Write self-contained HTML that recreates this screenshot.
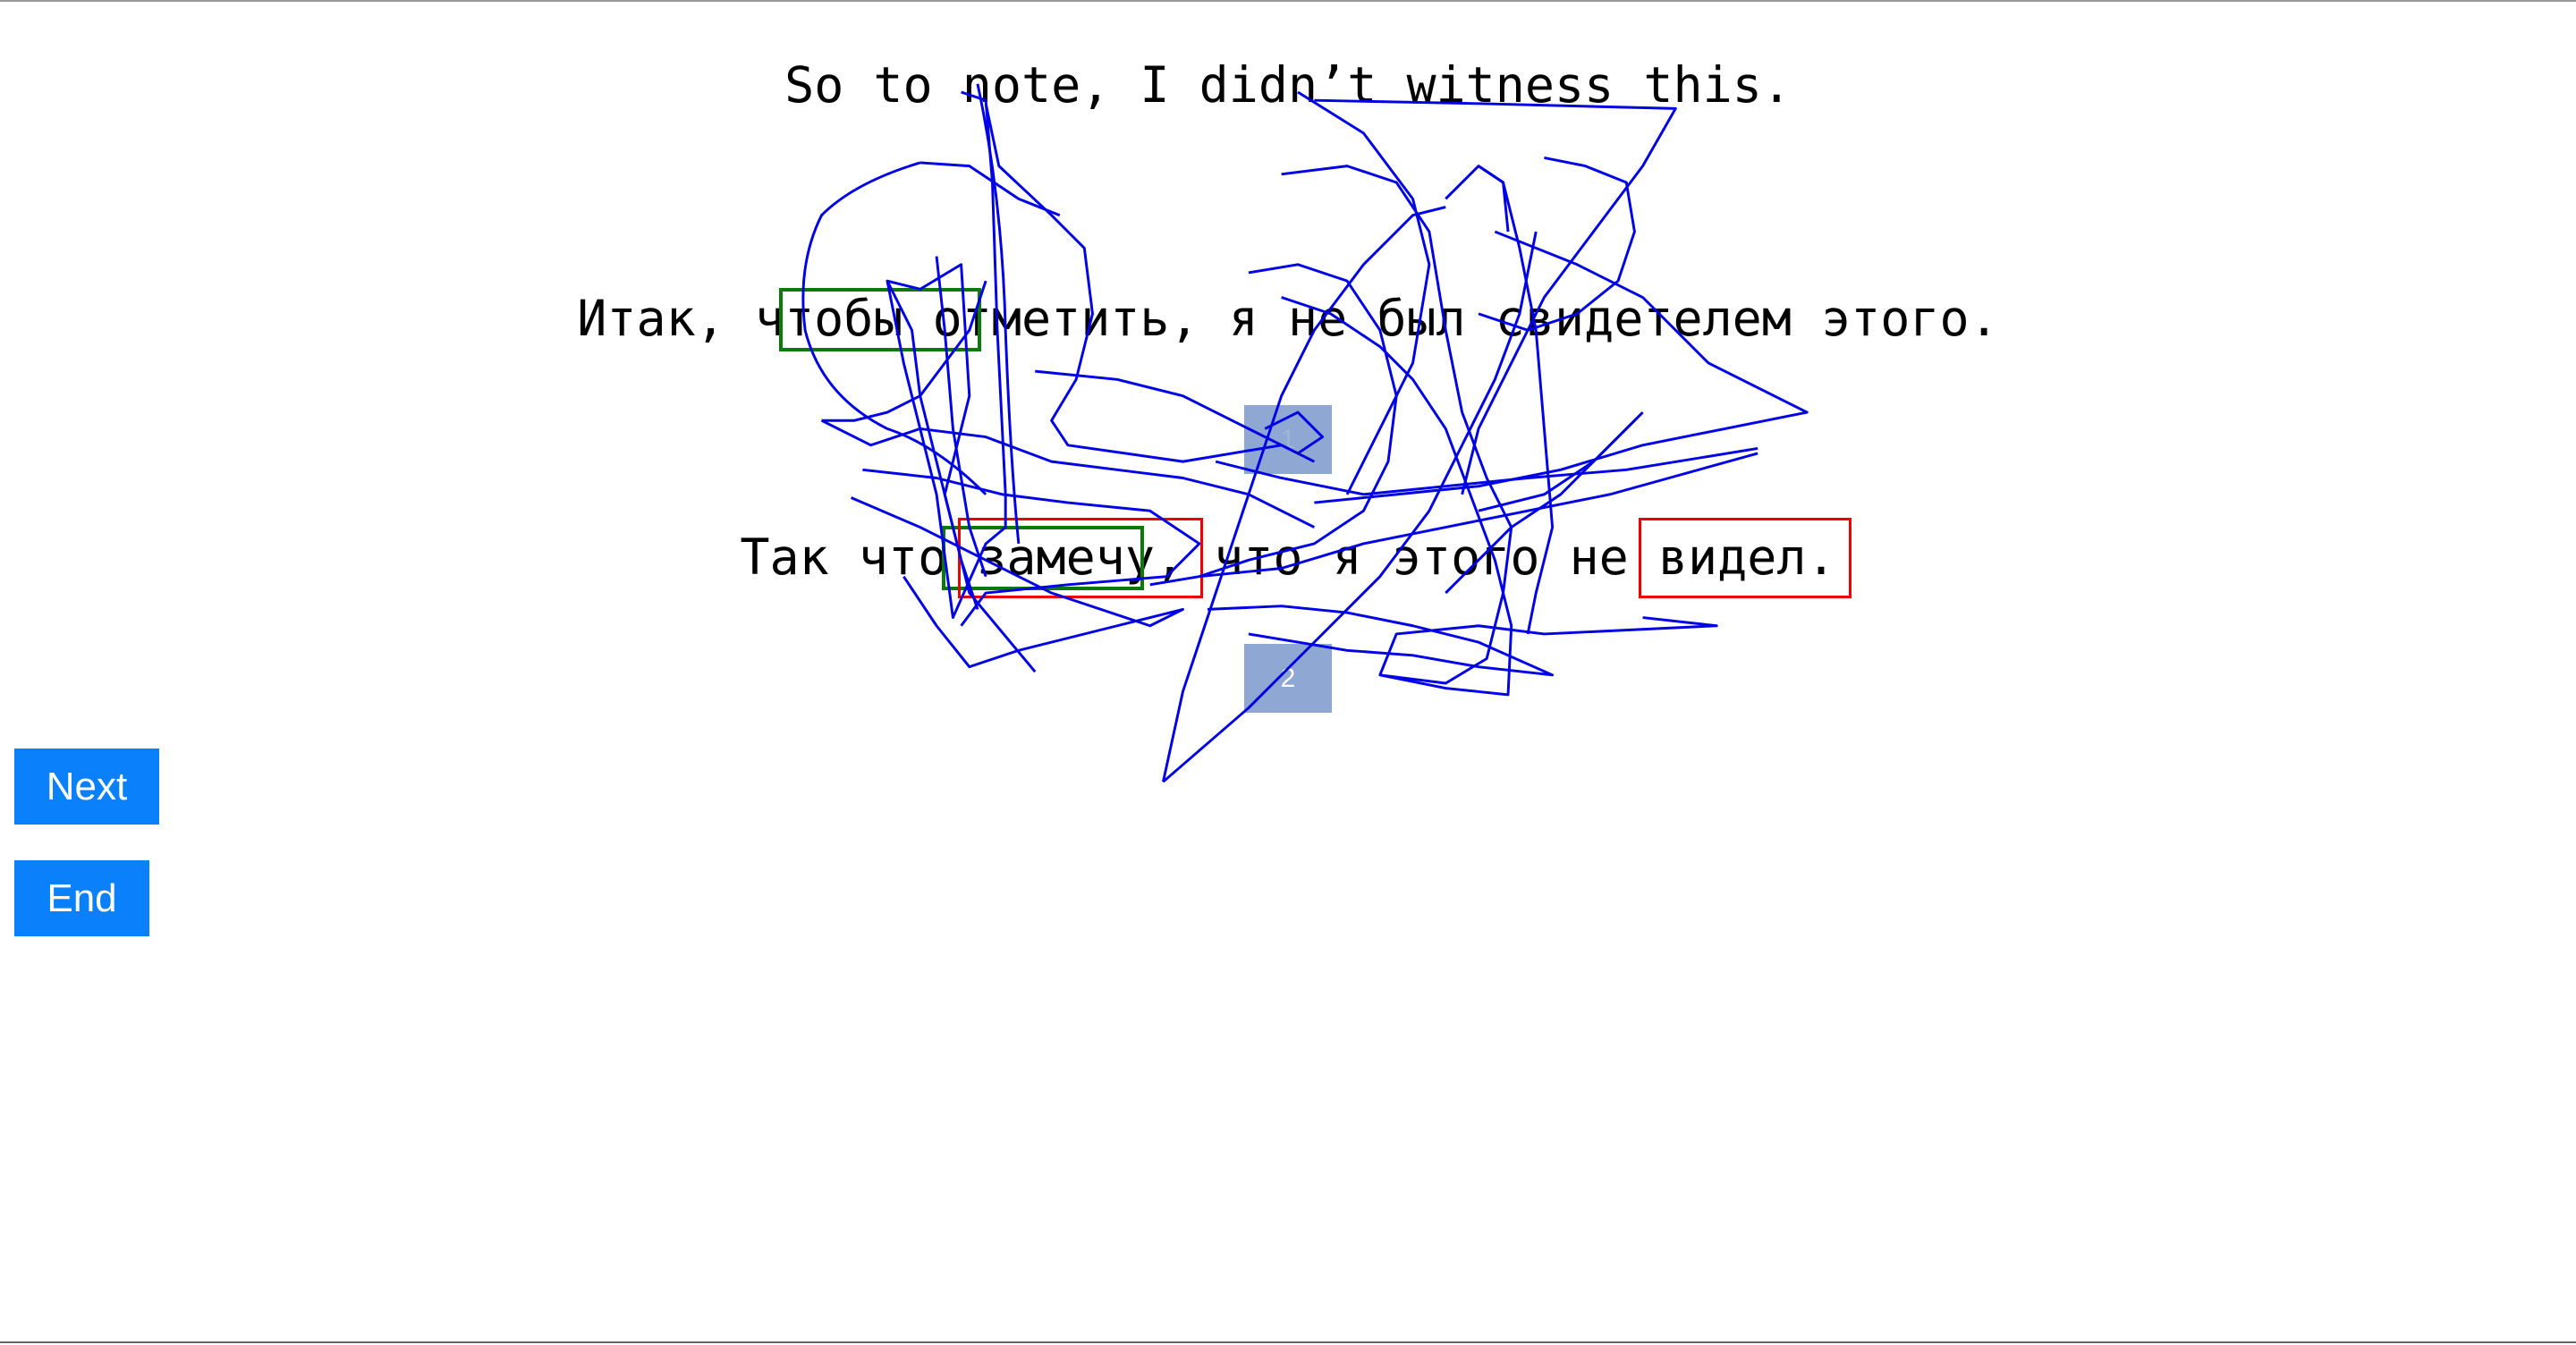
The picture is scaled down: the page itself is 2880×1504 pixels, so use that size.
<!DOCTYPE html>
<html><head><meta charset="utf-8"><style>
html,body{margin:0;padding:0;background:#fff;}
body{width:2880px;height:1502px;position:relative;overflow:hidden;border-top:2px solid #999;border-bottom:2px solid #666;box-sizing:border-box;}
.t{position:absolute;left:0;width:2880px;text-align:center;font-family:"DejaVu Sans Mono","Liberation Mono",monospace;font-size:55px;color:#000;line-height:1;}
.box{position:absolute;box-sizing:border-box;}
.sq{position:absolute;background:#8fa7d3;color:#fff;font-family:"Liberation Sans",sans-serif;font-size:30px;text-align:center;}
.btn{position:absolute;background:#0a80fb;color:#fff;font-family:"Liberation Sans",Arial,sans-serif;font-size:44px;text-align:center;}
svg{position:absolute;left:0;top:0;}
</style></head><body>
<div class="t" style="top:66px;">So to note, I didn’t witness this.</div>
<div class="t" style="top:327px;">Итак, чтобы отметить, я не был свидетелем этого.</div>
<div class="t" style="top:594px;">Так что замечу, что я этого не видел.</div>

<div class="sq" style="left:1391px;top:451px;width:98px;height:77px;line-height:77px;color:#9fb3d9">1</div>
<div class="sq" style="left:1391px;top:718px;width:98px;height:77px;line-height:77px;">2</div>

<div class="box" style="left:871px;top:320px;width:226px;height:71px;border:4px solid #0a7a0a"></div>
<div class="box" style="left:1053px;top:586px;width:226px;height:72px;border:4px solid #0a7a0a"></div>
<div class="box" style="left:1071px;top:577px;width:274px;height:90px;border:3px solid #e00"></div>
<div class="box" style="left:1832px;top:577px;width:238px;height:90px;border:3px solid #e00"></div>

<svg width="2880" height="1502" viewBox="0 0 1568 818" fill="none" stroke="#0000e6" stroke-width="1.6" stroke-linejoin="round">
<path d="M585 55 L600 60 L604 110 L607 200 L612 300 L612 320 L600 330 L580 375 L570 300 L550 220 L540 170 L560 175 L585 160 L590 240 L575 300 L590 360 L630 408"/>
<path d="M595 50 Q610 120 612 200 Q615 280 620 330"/>
<path d="M600 62 L608 100 L640 130 L660 150 L665 190 L655 230 L640 255 L650 270 L720 280 L780 270 L800 280"/>
<path d="M560 98 Q520 110 500 130 Q485 160 490 200 Q500 240 540 260 Q570 270 600 300"/>
<path d="M560 98 L590 100 L620 120 L645 130"/>
<path d="M500 255 L530 270 L560 260 L600 265 L640 280 L720 290 L760 300 L800 320"/>
<path d="M525 285 L570 290 L610 300 L650 305 L700 310 L730 330 L710 350 L650 355 L600 360 L585 380"/>
<path d="M518 302 L560 320 L600 340 L640 360 L700 380 L720 370 L680 380 L620 395 L590 405 L570 380 L550 350"/>
<path d="M708 475 L720 420 L740 360 L760 300 L780 240 L800 200 L830 160 L860 130 L880 125"/>
<path d="M708 475 L760 430 L800 390 L840 350 L870 310 L890 270 L910 230 L925 190 L935 140"/>
<path d="M780 105 L820 100 L850 110 L870 140 L880 200 L890 250 L905 290 L920 320 L915 360 L905 400 L880 415 L840 410 L850 385 L900 380 L940 385 L1045 380 L1000 375"/>
<path d="M790 55 L830 80 L860 120 L870 160 L860 220 L840 260 L820 300"/>
<path d="M940 95 L965 100 L990 110 L995 140 L985 170 L960 190 L930 200 L900 190"/>
<path d="M900 100 L915 110 L925 150 L935 200 L940 260 L945 320 L935 360 L930 385"/>
<path d="M910 140 L960 160 L1000 180 L1040 220 L1100 250 L1050 260 L1000 270 L950 285 L900 295 L850 300 L800 305"/>
<path d="M800 60 L900 62 L1020 65 L1000 100 L970 140 L940 180 L920 220 L900 260 L890 300"/>
<path d="M760 165 L790 160 L820 170 L840 200 L850 240 L845 280 L830 310 L800 330 L760 340 L730 350 L700 355"/>
<path d="M740 280 L780 290 L830 300 L880 295 L930 290 L990 285 L1070 272"/>
<path d="M730 350 L780 345 L830 330 L880 320 L930 310 L980 300 L1070 275"/>
<path d="M735 370 L780 368 L820 372 L860 380 L900 390 L945 410 L900 405 L860 398 L820 395 L790 390 L760 385"/>
<path d="M840 410 L880 418 L918 422 L920 380 L910 340 L895 300 L880 260 L860 230 L840 210 L810 190 L780 180"/>
<path d="M1000 250 L990 260 L970 280 L950 300 L920 320 L900 340 L880 360"/>
<path d="M630 225 L680 230 L720 240 L760 260 L790 275 L805 265 L790 250 L770 260"/>
<path d="M540 170 L555 200 L560 240 L575 300 L585 340 L595 370"/>
<path d="M570 155 L575 200 L580 260 L590 320 L600 350"/>
<path d="M600 170 L590 200 L575 220 L560 240 L540 250 L520 255 L500 255"/>
<path d="M995 255 L970 280 L940 300 L900 310"/>
<path d="M880 120 L900 100 L915 110 L918 140"/>
</svg>

<div class="btn" style="left:16px;top:835px;width:162px;height:85px;line-height:85px;">Next</div>
<div class="btn" style="left:16px;top:960px;width:151px;height:85px;line-height:85px;">End</div>
</body></html>
